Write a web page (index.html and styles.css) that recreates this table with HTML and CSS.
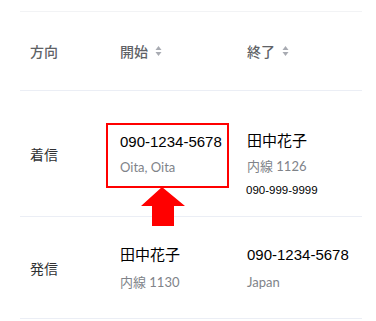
FILE: index.html
```html
<!DOCTYPE html>
<html lang="ja">
<head>
<meta charset="utf-8">
<link rel="stylesheet" href="styles.css">
</head>
<body>
<div class="table">
  <div class="row head">
    <div class="cell">方向</div>
    <div class="cell">開始<svg class="sort" width="7" height="12" viewBox="0 0 7 12"><path d="M3.5 1 L6.5 5 H0.5 Z M3.5 11 L6.5 7 H0.5 Z" fill="#a8abb2"/></svg></div>
    <div class="cell">終了<svg class="sort" width="7" height="12" viewBox="0 0 7 12"><path d="M3.5 1 L6.5 5 H0.5 Z M3.5 11 L6.5 7 H0.5 Z" fill="#a8abb2"/></svg></div>
  </div>
  <div class="row r1">
    <div class="cell dir">着信</div>
    <div class="cell stack">
      <div class="main">090-1234-5678</div>
      <div class="sub">Oita, Oita</div>
    </div>
    <div class="cell stack top">
      <div class="main">田中花子</div>
      <div class="sub">内線 1126</div>
      <div class="extra">090-999-9999</div>
    </div>
  </div>
  <div class="row r2">
    <div class="cell dir">発信</div>
    <div class="cell stack">
      <div class="main">田中花子</div>
      <div class="sub">内線 1130</div>
    </div>
    <div class="cell stack">
      <div class="main">090-1234-5678</div>
      <div class="sub">Japan</div>
    </div>
  </div>
  <div class="highlight"></div>
  <svg class="arrow" width="44" height="39" viewBox="0 0 44 39"><polygon points="21,0 44,19 33,19 33,39 11,39 11,19 0,19" fill="#ff0000"/></svg>
</div>
</body>
</html>
```

FILE: styles.css
```css
html, body {
  margin: 0;
  padding: 0;
  background: #ffffff;
}
body {
  padding-top: 11px;
  font-family: "Lato", "Noto Sans CJK JP", sans-serif;
}
.table {
  position: relative;
  margin-left: 20px;
  width: 342px;
  border-top: 1px solid #f2f3f5;
}
.row {
  display: grid;
  grid-template-columns: 90px 127px 125px;
  border-bottom: 1px solid #ebeef5;
}
.head { height: 78px; }
.r1 { height: 125px; }
.r2 { height: 101px; }
.cell {
  padding-left: 10px;
  display: flex;
  align-items: center;
}
.head .cell {
  font-family: "Noto Sans CJK JP", sans-serif;
  font-size: 14px;
  font-weight: 500;
  color: #606266;
}
.sort {
  margin-left: 7px;
}
.dir {
  font-family: "Noto Sans CJK JP", sans-serif;
  font-size: 14px;
  color: #303133;
}
.stack {
  flex-direction: column;
  justify-content: center;
  align-items: flex-start;
}
.stack.top {
  justify-content: flex-start;
  padding-top: 40px;
}
.main {
  font-family: "Liberation Sans", "Noto Sans CJK JP", sans-serif;
  font-size: 15px;
  line-height: 20px;
  color: #000000;
}
.sub {
  font-family: "Lato", "Noto Sans CJK JP", sans-serif;
  font-size: 13px;
  line-height: 16px;
  color: #808389;
  margin-top: 7px;
}
.r2 .sub { margin-top: 9px; }
.extra {
  font-family: "Liberation Sans", sans-serif;
  font-size: 11.5px;
  line-height: 16px;
  color: #000000;
  margin-top: 8px;
  margin-left: -1px;
}
.highlight {
  position: absolute;
  left: 86px;
  top: 111px;
  width: 119px;
  height: 61px;
  border: 2px solid #ff0000;
}
.arrow {
  position: absolute;
  left: 121px;
  top: 175px;
}
```
